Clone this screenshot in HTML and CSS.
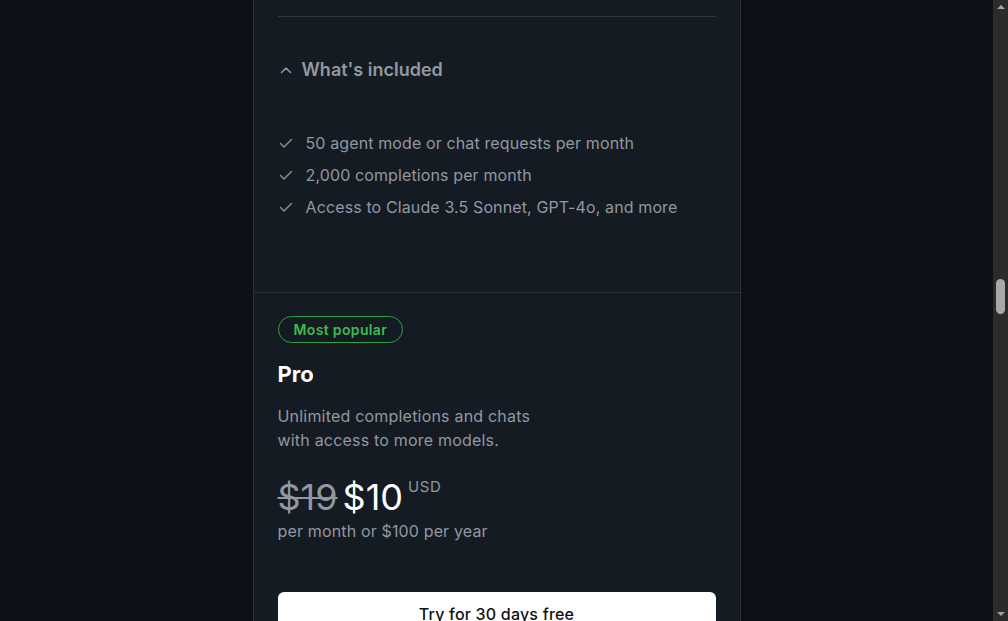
FILE: index.html
```html
<!DOCTYPE html>
<html lang="en">
<head>
<meta charset="utf-8">
<title>Pricing</title>
<link rel="stylesheet" href="styles.css">
</head>
<body>
<div class="page">
  <main class="main">
    <div class="card">
      <section class="plan plan-free">
        <hr class="divider">
        <button class="toggle" type="button">
          <svg class="chev" width="16" height="16" viewBox="0 0 16 16" aria-hidden="true"><path d="M3.5 10.5 8 6l4.5 4.5" fill="none" stroke="currentColor" stroke-width="1.5" stroke-linecap="round" stroke-linejoin="round"/></svg>
          <span>What's included</span>
        </button>
        <ul class="features">
          <li><svg class="check" width="16" height="16" viewBox="0 0 16 16" aria-hidden="true"><path d="M2.5 8.5 6 12l7.5-7.5" fill="none" stroke="currentColor" stroke-width="1.3" stroke-linecap="round" stroke-linejoin="round"/></svg>50 agent mode or chat requests per month</li>
          <li><svg class="check" width="16" height="16" viewBox="0 0 16 16" aria-hidden="true"><path d="M2.5 8.5 6 12l7.5-7.5" fill="none" stroke="currentColor" stroke-width="1.3" stroke-linecap="round" stroke-linejoin="round"/></svg>2,000 completions per month</li>
          <li><svg class="check" width="16" height="16" viewBox="0 0 16 16" aria-hidden="true"><path d="M2.5 8.5 6 12l7.5-7.5" fill="none" stroke="currentColor" stroke-width="1.3" stroke-linecap="round" stroke-linejoin="round"/></svg>Access to Claude 3.5 Sonnet, GPT-4o, and more</li>
        </ul>
      </section>
      <section class="plan plan-pro">
        <span class="badge">Most popular</span>
        <h2 class="plan-name">Pro</h2>
        <p class="desc">Unlimited completions and chats<br>with access to more models.</p>
        <div class="price">
          <s class="old">$19</s>
          <span class="new">$10</span>
          <span class="cur">USD</span>
        </div>
        <p class="period">per month or $100 per year</p>
        <button class="cta" type="button">Try for 30 days free</button>
      </section>
    </div>
  </main>
  <div class="scrollbar" aria-hidden="true">
    <span class="arrow up"></span>
    <div class="track"><span class="thumb"></span></div>
    <span class="arrow down"></span>
  </div>
</div>
</body>
</html>
```

FILE: styles.css
```css
* { box-sizing: border-box; }
html, body { margin: 0; height: 100%; overflow: hidden; }
body {
  background: #0d1117;
  font-family: Inter, "Noto Sans", "Liberation Sans", sans-serif;
  color: #9198a1;
}
.page {
  display: flex;
  height: 621px;
}
.main {
  flex: 1;
  display: flex;
  justify-content: center;
  overflow: hidden;
}
.card {
  width: 488px;
  background: #151b23;
  border-left: 1px solid #2a3038;
  border-right: 1px solid #2a3038;
  display: flex;
  flex-direction: column;
}
.plan { padding: 0 24px; }
.plan-free {
  padding-top: 16px;
  padding-bottom: 69px;
  border-bottom: 1px solid #2a3038;
}
.divider {
  margin: 0;
  border: 0;
  border-top: 1px solid #30363d;
}
.toggle {
  margin-top: 39px;
  display: flex;
  align-items: center;
  gap: 8px;
  padding: 0;
  background: none;
  border: 0;
  font: inherit;
  font-size: 18px;
  font-weight: 600;
  line-height: 28px;
  color: #9198a1;
}
.chev { color: #9198a1; }
.features {
  list-style: none;
  margin: 43px 0 0;
  padding: 0;
}
.features li {
  display: flex;
  align-items: center;
  gap: 12px;
  font-size: 16px;
  line-height: 32px;
  letter-spacing: 0.12px;
}
.check { color: #9198a1; flex: none; }
.plan-pro {
  padding-top: 23px;
  display: flex;
  flex-direction: column;
  align-items: flex-start;
}
.badge {
  display: inline-block;
  height: 27px;
  padding: 0 15px;
  border: 1px solid #2ea043;
  border-radius: 14px;
  color: #3fb950;
  font-size: 14px;
  font-weight: 600;
  line-height: 25px;
  letter-spacing: 0.35px;
}
.plan-name {
  margin: 15px 0 0;
  font-size: 22px;
  font-weight: 700;
  line-height: 32px;
  color: #ffffff;
}
.desc {
  margin: 14px 0 0;
  font-size: 16px;
  line-height: 24px;
  letter-spacing: 0.2px;
}
.price {
  margin-top: 23px;
  display: flex;
  align-items: flex-start;
  gap: 5px;
  line-height: 44px;
}
.old {
  font-size: 36px;
  color: #9198a1;
  text-decoration-thickness: 2px;
}
.new {
  font-size: 36px;
  font-weight: 400;
  color: #ffffff;
}
.cur {
  font-size: 15px;
  line-height: 20px;
  margin-top: 2px;
  letter-spacing: 0.6px;
}
.period {
  margin: 0;
  font-size: 16px;
  line-height: 24px;
  letter-spacing: 0.15px;
}
.cta {
  margin-top: 49px;
  width: 100%;
  height: 44px;
  background: #ffffff;
  color: #0d1117;
  border: 0;
  border-radius: 6px;
  font: inherit;
  font-size: 16px;
  font-weight: 500;
  padding: 12px 0;
  line-height: 20px;
  align-self: stretch;
  display: flex;
  justify-content: center;
  align-items: flex-start;
  letter-spacing: 0.2px;
}
.scrollbar {
  width: 15px;
  flex: none;
  background: #2b2b2b;
  display: flex;
  flex-direction: column;
  align-items: center;
}
.arrow {
  width: 0; height: 0;
  border-left: 4px solid transparent;
  border-right: 4px solid transparent;
  margin: 5px 0;
}
.arrow.up { border-bottom: 4px solid #a3a3a3; }
.arrow.down { border-top: 4px solid #a3a3a3; }
.track {
  flex: 1;
  width: 100%;
  display: flex;
  justify-content: center;
  padding-top: 265px;
}
.thumb {
  width: 9px;
  height: 35px;
  border-radius: 5px;
  background: #a8a8a8;
}
```
